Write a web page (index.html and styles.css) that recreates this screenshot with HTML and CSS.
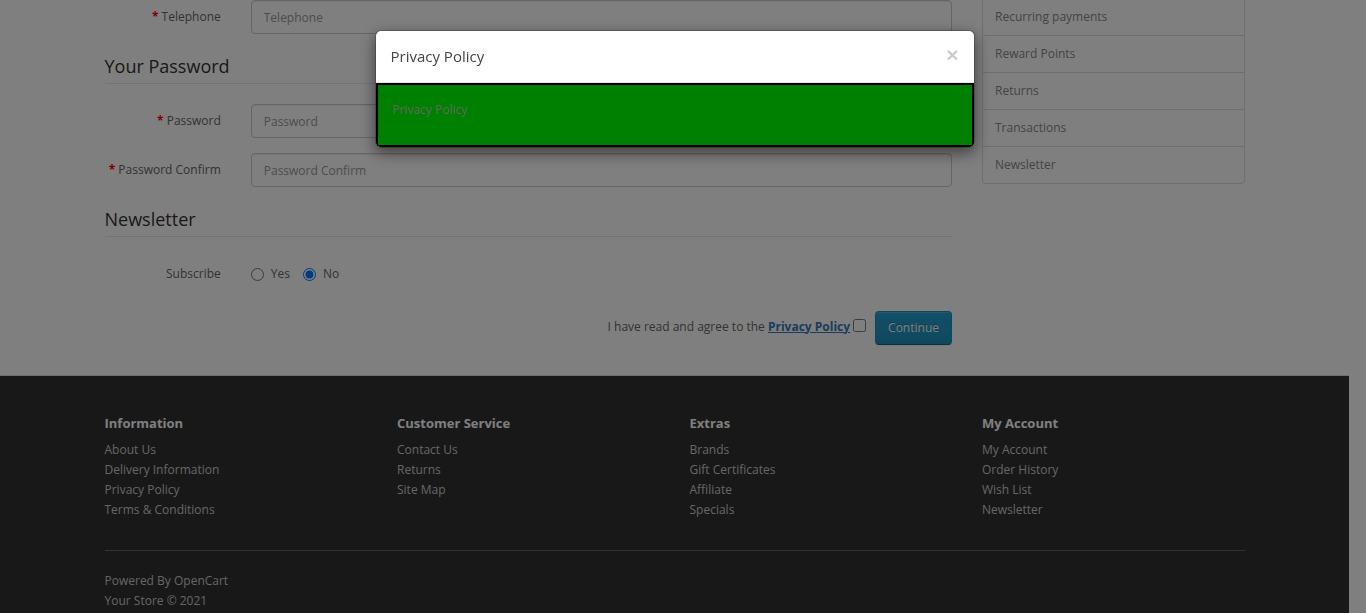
FILE: index.html
```html
<!DOCTYPE html>
<html lang="en">
<head>
<meta charset="utf-8">
<title>Register Account</title>
<link rel="stylesheet" href="styles.css">
</head>
<body>
<div class="container">
  <div class="row">
    <div class="col-main">
      <form class="form-horizontal">
        <div class="form-group">
          <label class="control-label required">Telephone</label>
          <div class="field"><input type="tel" class="form-control" placeholder="Telephone"></div>
        </div>
        <fieldset>
          <legend>Your Password</legend>
          <div class="form-group">
            <label class="control-label required">Password</label>
            <div class="field"><input type="password" class="form-control" placeholder="Password"></div>
          </div>
          <div class="form-group">
            <label class="control-label required">Password Confirm</label>
            <div class="field"><input type="password" class="form-control" placeholder="Password Confirm"></div>
          </div>
        </fieldset>
        <fieldset>
          <legend>Newsletter</legend>
          <div class="form-group">
            <label class="control-label">Subscribe</label>
            <div class="field radios">
              <label class="radio-inline"><input type="radio" name="newsletter"> Yes</label>
              <label class="radio-inline"><input type="radio" name="newsletter" checked> No</label>
            </div>
          </div>
        </fieldset>
        <div class="buttons">
          <span class="agree">I have read and agree to the <a href="#" class="agree-link"><b>Privacy Policy</b></a></span>
          <input type="checkbox" class="agree-check">
          <button type="button" class="btn-primary">Continue</button>
        </div>
      </form>
    </div>
    <aside class="col-side">
      <div class="list-group">
        <a href="#" class="list-group-item">Recurring payments</a>
        <a href="#" class="list-group-item">Reward Points</a>
        <a href="#" class="list-group-item">Returns</a>
        <a href="#" class="list-group-item">Transactions</a>
        <a href="#" class="list-group-item">Newsletter</a>
      </div>
    </aside>
  </div>
</div>

<footer class="footer">
  <div class="container">
    <div class="row">
      <div class="col-foot">
        <h5>Information</h5>
        <ul class="links">
          <li><a href="#">About Us</a></li>
          <li><a href="#">Delivery Information</a></li>
          <li><a href="#">Privacy Policy</a></li>
          <li><a href="#">Terms &amp; Conditions</a></li>
        </ul>
      </div>
      <div class="col-foot">
        <h5>Customer Service</h5>
        <ul class="links">
          <li><a href="#">Contact Us</a></li>
          <li><a href="#">Returns</a></li>
          <li><a href="#">Site Map</a></li>
        </ul>
      </div>
      <div class="col-foot">
        <h5>Extras</h5>
        <ul class="links">
          <li><a href="#">Brands</a></li>
          <li><a href="#">Gift Certificates</a></li>
          <li><a href="#">Affiliate</a></li>
          <li><a href="#">Specials</a></li>
        </ul>
      </div>
      <div class="col-foot">
        <h5>My Account</h5>
        <ul class="links">
          <li><a href="#">My Account</a></li>
          <li><a href="#">Order History</a></li>
          <li><a href="#">Wish List</a></li>
          <li><a href="#">Newsletter</a></li>
        </ul>
      </div>
    </div>
    <hr class="foot-rule">
    <p class="powered">Powered By <a href="#">OpenCart</a><br>Your Store &copy; 2021</p>
  </div>
</footer>

<div class="modal-backdrop"></div>
<div class="modal">
  <div class="modal-dialog">
    <div class="modal-content">
      <div class="modal-header">
        <button type="button" class="close">&times;</button>
        <h4 class="modal-title">Privacy Policy</h4>
      </div>
      <div class="modal-body">
        <p>Privacy Policy</p>
      </div>
    </div>
  </div>
</div>
</body>
</html>
```

FILE: styles.css
```css
* { box-sizing: border-box; }

html, body { height: 100%; }

body {
  margin: 0;
  padding-right: 17px;
  background: #fff;
  font-family: "Open Sans", "Liberation Sans", sans-serif;
  font-size: 12px;
  line-height: 20px;
  color: #666;
  overflow: hidden;
}

a { color: #23a1d1; text-decoration: none; }

.container {
  width: 1170px;
  margin: 0 auto;
  padding: 0 15px;
}

.row {
  display: flex;
  margin: 0 -15px;
}

.col-main {
  width: 75%;
  padding: 0 15px;
}

.col-side {
  width: 25%;
  padding: 0 15px;
}

/* form */
.form-horizontal { margin: 0; }

.form-group {
  display: flex;
  margin: 0 -15px 15px;
}

.control-label {
  width: 16.6667%;
  padding: 7px 15px 7px;
  text-align: right;
  line-height: 20px;
  color: #666;
}

.control-label.required::before {
  content: "* ";
  color: #f00;
  font-weight: bold;
}

.field {
  width: 83.3333%;
  padding: 0 15px;
}

.form-control {
  display: block;
  width: 100%;
  height: 34px;
  padding: 6px 12px;
  font-family: inherit;
  font-size: 12px;
  line-height: 20px;
  color: #555;
  background: #fff;
  border: 1px solid #ccc;
  border-radius: 4px;
  box-shadow: inset 0 1px 1px rgba(0,0,0,.075);
}

.form-control::placeholder { color: #999; }

fieldset {
  margin: 0;
  padding: 0;
  border: 0;
  min-width: 0;
}

legend {
  display: block;
  width: 100%;
  padding: 7px 0;
  margin: 0 0 20px;
  font-size: 18px;
  line-height: 20px;
  color: #333;
  border-bottom: 1px solid #e5e5e5;
}

.radios {
  display: flex;
  align-items: center;
  height: 34px;
  padding-top: 0;
}

.radio-inline {
  display: inline-flex;
  align-items: center;
  margin-right: 13px;
  color: #666;
}

.radio-inline input {
  width: 13px;
  height: 13px;
  margin: 0 7px 0 0;
}

.buttons {
  display: flex;
  justify-content: flex-end;
  align-items: center;
  margin-top: 5px;
  height: 34px;
}

.agree { color: #666; padding-bottom: 3px; }

.agree-link { text-decoration: underline; color: #337ab7; }

.agree-check {
  width: 13px;
  height: 13px;
  margin: 0 9px 5px 3px;
}

.btn-primary {
  height: 34px;
  padding: 6px 12px;
  font-family: inherit;
  font-size: 12px;
  line-height: 20px;
  color: #fff;
  background: linear-gradient(to bottom, #23a1d1, #1f90bb);
  border: 1px solid #1f90bb;
  border-bottom-color: #145e7a;
  border-radius: 4px;
  text-shadow: 0 -1px 0 rgba(0,0,0,.25);
  box-shadow: inset 0 1px 0 rgba(255,255,255,.2), 0 1px 2px rgba(0,0,0,.05);
}

/* side list */
.list-group {
  margin-top: -2px;
  border-radius: 4px;
}

.list-group-item {
  display: block;
  padding: 8px 12px;
  line-height: 20px;
  color: #888;
  border: 1px solid #ddd;
  margin-bottom: -1px;
}

.list-group-item:last-child {
  margin-bottom: 0;
  border-bottom-left-radius: 4px;
  border-bottom-right-radius: 4px;
}

/* footer */
.footer {
  margin-top: 30px;
  padding-top: 30px;
  background: #303030;
  border-top: 1px solid #ddd;
  color: #e2e2e2;
  min-height: 300px;
}

.col-foot {
  width: 25%;
  padding: 0 15px;
}

.footer h5 {
  margin: 10px 0 10px;
  font-size: 13px;
  line-height: 14px;
  font-weight: bold;
  color: #fff;
}

.links {
  list-style: none;
  margin: 0 0 10px;
  padding: 0;
}

.links a { color: #ccc; }

.foot-rule {
  margin: 20px 0;
  border: 0;
  border-top: 1px solid #666;
  height: 0;
}

.powered {
  margin: 0;
  color: #ccc;
}

.powered a { color: #ccc; }

/* modal */
.modal-backdrop {
  position: fixed;
  inset: 0;
  background: rgba(0,0,0,.5);
}

.modal {
  position: fixed;
  inset: 0;
  padding-right: 17px;
}

.modal-dialog {
  width: 600px;
  margin: 30px auto;
}

.modal-content {
  background: #fff;
  background-clip: padding-box;
  border: 1px solid rgba(0,0,0,.2);
  border-radius: 6px;
  box-shadow: 0 5px 15px rgba(0,0,0,.5);
  overflow: hidden;
}

.modal-header {
  padding: 15px;
  border-bottom: 1px solid #e5e5e5;
}

.modal-title {
  margin: 0;
  font-size: 15px;
  line-height: 21.4px;
  font-weight: normal;
  color: #444;
}

.close {
  float: right;
  margin-top: -2px;
  padding: 0;
  background: transparent;
  border: 0;
  font-family: "Liberation Sans", sans-serif;
  font-size: 21px;
  font-weight: bold;
  line-height: 1;
  color: #000;
  opacity: .2;
}

.modal-body {
  padding: 15px;
  background: #008000;
  border: 2px solid #000;
}

.modal-body p {
  margin: 0 0 10px;
  color: #666;
}
```
